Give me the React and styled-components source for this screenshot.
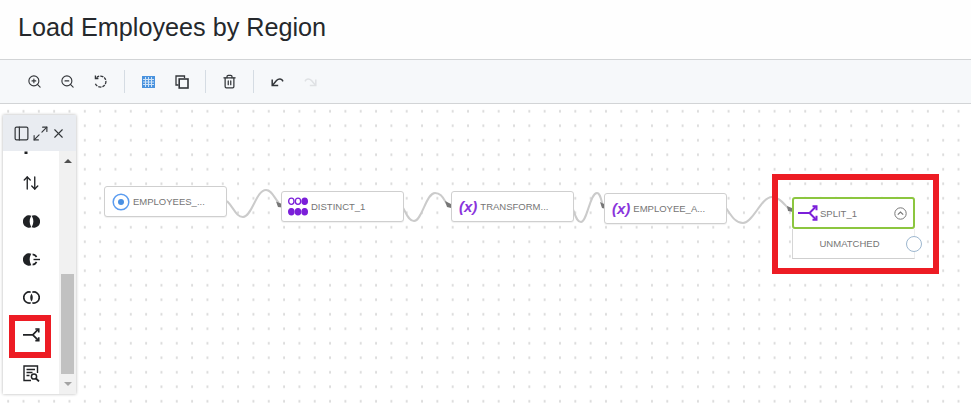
import React from 'react';
import styled, { createGlobalStyle } from 'styled-components';
import { ZoomIn, ZoomOut, Trash2, PanelLeft, Maximize2, X, ArrowUpDown } from 'lucide-react';

const GlobalStyle = createGlobalStyle`
  html, body {
    margin: 0;
    padding: 0;
    height: 100%;
    overflow: hidden;
    background: #fff;
    font-family: "Liberation Sans", Arial, sans-serif;
  }
  #root { height: 100%; }
`;

const Page = styled.div`
  display: flex;
  flex-direction: column;
  width: 971px;
  height: 407px;
`;

const TitleBar = styled.header`
  display: flex;
  align-items: center;
  flex: 0 0 60px;
  box-sizing: border-box;
  padding: 0 18px 4px;
  background: #fefefe;
  border-bottom: 1px solid #d2d4d6;
`;

const Title = styled.h1`
  margin: 0;
  font-size: 25.2px;
  font-weight: 400;
  color: #25282c;
`;

const Toolbar = styled.div`
  display: flex;
  align-items: center;
  flex: 0 0 44px;
  box-sizing: border-box;
  padding: 0 0 0 18px;
  background: #f6f8fa;
  border-bottom: 1px solid #d2d4d6;
`;

const ToolButton = styled.button`
  display: flex;
  align-items: center;
  justify-content: center;
  width: 33px;
  height: 30px;
  padding: 0;
  border: 0;
  background: none;
  color: ${p => (p.$disabled ? '#dfe1e4' : '#33363a')};
`;

const Separator = styled.span`
  width: 1px;
  height: 23px;
  margin: 0 7px;
  background: #d5dce3;
`;

const Canvas = styled.main`
  position: relative;
  flex: 1;
  overflow: hidden;
  background-color: #fff;
  background-image: radial-gradient(circle at center, #dadada 1px, transparent 1.3px);
  background-size: 15.33px 14.5px;
  background-position: 0.5px 0px;
`;

const Wires = styled.svg`
  position: absolute;
  left: 0;
  top: -104px;
  width: 971px;
  height: 407px;
  pointer-events: none;
`;

const Node = styled.div`
  position: absolute;
  left: ${p => p.$x}px;
  top: ${p => p.$y - 104}px;
  display: flex;
  align-items: center;
  gap: 3px;
  box-sizing: border-box;
  width: 123px;
  height: 31px;
  padding-left: ${p => p.$pad}px;
  background: #fff;
  border: 1px solid #cfcfcf;
  border-radius: 3px;
  box-shadow: 0 1px 1px rgba(0, 0, 0, 0.06);
`;

const NodeLabel = styled.span`
  font-size: 9.5px;
  color: #757575;
  white-space: nowrap;
`;

const Fx = styled.span`
  font-size: 15px;
  font-weight: 700;
  font-style: italic;
  color: #8a35dc;
  line-height: 1;
`;

const SplitBlock = styled.div`
  position: absolute;
  left: 792px;
  top: ${197 - 104}px;
  width: 123px;
`;

const SplitHead = styled.div`
  position: relative;
  z-index: 1;
  display: flex;
  align-items: center;
  gap: 2px;
  box-sizing: border-box;
  height: 32px;
  padding: 0 6px 0 4px;
  background: #fff;
  border: 2px solid #8cc63f;
  border-radius: 3px;
`;

const SplitName = styled(NodeLabel)`
  flex: 1;
`;

const Port = styled.div`
  position: relative;
  display: flex;
  align-items: center;
  justify-content: center;
  box-sizing: border-box;
  height: 30px;
  padding-right: 8px;
  background: #fff;
  border-left: 1px solid #d6d6d6;
  border-bottom: 1px solid #cfcfcf;
  border-right: 1px solid #eeeeee;
`;

const PortDot = styled.span`
  position: absolute;
  right: -8px;
  top: 7px;
  box-sizing: border-box;
  width: 16px;
  height: 16px;
  background: #fff;
  border: 1.5px solid #9db7cf;
  border-radius: 50%;
`;

const RedFrame = styled.div`
  position: absolute;
  left: 772px;
  top: ${174 - 104}px;
  box-sizing: border-box;
  width: 167px;
  height: 100px;
  border: 6px solid #ed1c24;
  pointer-events: none;
`;

const Palette = styled.aside`
  position: absolute;
  left: 3px;
  top: ${115 - 104}px;
  display: flex;
  flex-direction: column;
  width: 73px;
  height: 279px;
  background: #fff;
  box-shadow: 0 0 3px rgba(0, 0, 0, 0.3);
`;

const PaletteHead = styled.div`
  display: flex;
  align-items: center;
  justify-content: center;
  gap: 2px;
  flex: 0 0 36px;
  padding-top: 1px;
  box-sizing: border-box;
  background: #e9ecf1;
  color: #33363a;
`;

const PaletteBody = styled.div`
  display: flex;
  flex: 1;
  min-height: 0;
`;

const PaletteList = styled.div`
  display: flex;
  flex-direction: column;
  justify-content: flex-end;
  flex: 1;
  overflow: hidden;
  padding-bottom: 2px;
`;

const PaletteItem = styled.div`
  position: relative;
  display: flex;
  align-items: center;
  justify-content: center;
  flex: 0 0 38px;
  color: #202225;

  ${p => p.$active && `
    &::after {
      content: '';
      position: absolute;
      left: 6px;
      top: -1px;
      box-sizing: border-box;
      width: 42px;
      height: 43px;
      border: 6px solid #ed1c24;
    }
  `}
`;

const Scrollbar = styled.div`
  display: flex;
  flex-direction: column;
  align-items: center;
  flex: 0 0 17px;
  background: #f1f1f1;
`;

const ScrollArrow = styled.span`
  flex: 0 0 20px;
  display: flex;
  align-items: center;
  justify-content: center;

  &::before {
    content: '';
    border-left: 4px solid transparent;
    border-right: 4px solid transparent;
    ${p => (p.$down ? 'border-top: 4px solid #a3a3a3;' : 'border-bottom: 4px solid #505050;')}
  }
`;

const ScrollTrack = styled.div`
  display: flex;
  flex-direction: column;
  justify-content: flex-end;
  flex: 1;
  width: 13px;
`;

const ScrollThumb = styled.div`
  height: 100px;
  background: #c1c1c1;
`;

const ResetIcon = () => (
  <svg width="15" height="15" viewBox="0 0 15 15" fill="none" stroke="currentColor" strokeWidth="1.3">
    <path d="M3.6 3.6A5.5 5.5 0 1 1 2.3 9.5" strokeDasharray="3 1" />
    <path d="M2.4 1.5v3h3" />
  </svg>
);

const GridIcon = () => (
  <svg width="13" height="12" viewBox="0 0 13 12">
    <rect width="13" height="12" fill="#4a93de" />
    <path d="M3.5 1v10M6.5 1v10M9.5 1v10M1 3.5h11M1 6h11M1 8.5h11" stroke="#cfe3f7" strokeWidth="1" />
  </svg>
);

const CopyIcon = () => (
  <svg width="14" height="14" viewBox="0 0 14 14" fill="none" stroke="currentColor" strokeWidth="1.3">
    <path d="M9.5 3V1H1v9h2.5" />
    <rect x="4.2" y="4" width="8.8" height="9" strokeWidth="1.6" />
  </svg>
);

const UndoIcon = () => (
  <svg width="13" height="11" viewBox="0 0 13 11" fill="none" stroke="currentColor" strokeWidth="1.5">
    <path d="M1.2 3.5v6h6" />
    <path d="M1.5 9.2 5.5 4.6C7.6 2.4 10.8 2.4 12 5.4" />
  </svg>
);

const RedoIcon = () => (
  <svg width="13" height="11" viewBox="0 0 13 11" fill="none" stroke="currentColor" strokeWidth="1.5">
    <path d="M11.8 3.5v6h-6" />
    <path d="M11.5 9.2 7.5 4.6C5.4 2.4 2.2 2.4 1 5.4" />
  </svg>
);

const SplitIcon = ({ color, size = 20 }) => (
  <svg width={size} height={size * 0.8} viewBox="0 0 20 16" fill="none" stroke={color} strokeWidth="2">
    <path d="M0 8h11.5L17.5 2M11.5 8l6 6" />
    <path d="M14.5 1.2h4v4M14.5 14.8h4v-4" />
  </svg>
);

const DistinctIcon = () => (
  <svg width="20" height="19" viewBox="0 0 21 19" fill="#7b1fd9" stroke="#7b1fd9" strokeWidth="1.4">
    <ellipse cx="3.5" cy="4" rx="2.8" ry="3.3" fill="#fff" />
    <ellipse cx="10.5" cy="4" rx="2.8" ry="3.3" fill="#fff" />
    <ellipse cx="17.5" cy="4" rx="2.8" ry="3.3" />
    <ellipse cx="3.5" cy="15" rx="2.8" ry="3.3" />
    <ellipse cx="10.5" cy="15" rx="2.8" ry="3.3" />
    <ellipse cx="17.5" cy="15" rx="2.8" ry="3.3" />
  </svg>
);

const SourceIcon = () => (
  <svg width="18" height="18" viewBox="0 0 18 18">
    <circle cx="9" cy="9" r="7.8" fill="#fff" stroke="#5a9cf0" strokeWidth="1.5" />
    <circle cx="9" cy="9" r="3" fill="#4a90e2" />
  </svg>
);

const ChevronCircle = () => (
  <svg width="13" height="13" viewBox="0 0 13 13" fill="none" stroke="#777" strokeWidth="1">
    <circle cx="6.5" cy="6.5" r="5.7" />
    <path d="M3.8 7.6 6.5 5l2.7 2.6" strokeWidth="1.2" />
  </svg>
);

const InnerJoinIcon = () => (
  <svg width="17" height="13" viewBox="0 0 17 13" fill="currentColor">
    <path d="M8.3.7A6.2 6.2 0 1 0 8.3 12.3Q5 6.5 8.3.7Z" />
    <path d="M8.7.7A6.2 6.2 0 1 1 8.7 12.3Q12 6.5 8.7.7Z" />
  </svg>
);

const LookupIcon = () => (
  <svg width="17" height="13" viewBox="0 0 17 13" fill="currentColor">
    <path d="M8.3.7A6.2 6.2 0 1 0 8.3 12.3Q5 6.5 8.3.7Z" />
    <path d="M9.6 1.4A5 5 0 0 1 13.6 4M13.6 9A5 5 0 0 1 9.6 11.6" fill="none" stroke="currentColor" strokeWidth="1.6" />
    <path d="M10.5 6.5H17" fill="none" stroke="currentColor" strokeWidth="1.4" />
  </svg>
);

const OuterJoinIcon = () => (
  <svg width="17" height="13" viewBox="0 0 17 13" fill="none" stroke="currentColor" strokeWidth="1.7">
    <path d="M7.7 1.2A5.5 5.5 0 1 0 7.7 11.8" />
    <path d="M9.3 1.2A5.5 5.5 0 1 1 9.3 11.8" />
    <path d="M8.5 2.4Q11 6.5 8.5 10.6Q6 6.5 8.5 2.4Z" fill="currentColor" stroke="none" />
  </svg>
);

const ReportIcon = () => (
  <svg width="17" height="17" viewBox="0 0 17 17" fill="none" stroke="currentColor" strokeWidth="1.4">
    <path d="M8 15.5H1V1h13.5v7" />
    <path d="M3.5 4.5h8.5M3.5 7.5h6M3.5 10.5h3" />
    <circle cx="11" cy="11.5" r="2.6" strokeWidth="1.5" />
    <path d="M13 13.5 16 16.4" strokeWidth="1.8" />
  </svg>
);

const PartialIcon = () => (
  <svg width="17" height="17" viewBox="0 0 17 17" fill="currentColor">
    <rect x="1.5" y="14.5" width="3" height="2.5" />
  </svg>
);

const wires = [
  { line: 'M227 201 C234 208 236 217 243 217 C252 217 256 190 266 190 C272 190 274 198 279 203', tip: 'M276 201.5 L282 204 L282 207.5 L278 207Z' },
  { line: 'M402 206 C406 212 408 221 414 221 C422 221 426 193 435 193 C441 193 443 198 447 204', tip: 'M445 201 L451 204 L451 208 L447 207Z' },
  { line: 'M572 207 C575 213 576 222 581 222 C587 222 590 193 597 193 C600 193 601 199 603 206', tip: 'M600 202 L606 205 L606 209 L602 208Z' },
  { line: 'M726 208 C731 215 735 223 743 223 C753 223 761 197 772 197 C779 197 783 203 789 209', tip: 'M787 206 L793 208.5 L793 212 L788 211Z' },
];

const nodes = [
  { name: 'EMPLOYEES_...', x: 104, y: 186, pad: 7, icon: <SourceIcon /> },
  { name: 'DISTINCT_1', x: 281, y: 191, pad: 6, icon: <DistinctIcon /> },
  { name: 'TRANSFORM...', x: 451, y: 191, pad: 7, icon: <Fx>(x)</Fx> },
  { name: 'EMPLOYEE_A...', x: 604, y: 193, pad: 7, icon: <Fx>(x)</Fx> },
];

export default function App() {
  return (
    <Page>
      <GlobalStyle />
      <TitleBar>
        <Title>Load Employees by Region</Title>
      </TitleBar>
      <Toolbar>
        <ToolButton><ZoomIn size={15} strokeWidth={1.8} /></ToolButton>
        <ToolButton><ZoomOut size={15} strokeWidth={1.8} /></ToolButton>
        <ToolButton><ResetIcon /></ToolButton>
        <Separator />
        <ToolButton><GridIcon /></ToolButton>
        <ToolButton><CopyIcon /></ToolButton>
        <Separator />
        <ToolButton><Trash2 size={15} strokeWidth={2} /></ToolButton>
        <Separator />
        <ToolButton><UndoIcon /></ToolButton>
        <ToolButton $disabled><RedoIcon /></ToolButton>
      </Toolbar>
      <Canvas>
        <Wires viewBox="0 0 971 407">
          {wires.map(w => (
            <g key={w.line}>
              <path d={w.line} fill="none" stroke="#cbcbcb" strokeWidth="2" />
              <path d={w.tip} fill="#777" />
            </g>
          ))}
        </Wires>
        {nodes.map(n => (
          <Node key={n.name} $x={n.x} $y={n.y} $pad={n.pad}>
            {n.icon}
            <NodeLabel>{n.name}</NodeLabel>
          </Node>
        ))}
        <SplitBlock>
          <SplitHead>
            <SplitIcon color="#7b1fd9" />
            <SplitName>SPLIT_1</SplitName>
            <ChevronCircle />
          </SplitHead>
          <Port>
            <NodeLabel>UNMATCHED</NodeLabel>
            <PortDot />
          </Port>
        </SplitBlock>
        <RedFrame />
        <Palette>
          <PaletteHead>
            <PanelLeft size={17} strokeWidth={1.7} />
            <Maximize2 size={17} strokeWidth={1.6} />
            <X size={15} strokeWidth={1.8} />
          </PaletteHead>
          <PaletteBody>
            <PaletteList>
              <PaletteItem><PartialIcon /></PaletteItem>
              <PaletteItem><ArrowUpDown size={18} strokeWidth={1.8} /></PaletteItem>
              <PaletteItem><InnerJoinIcon /></PaletteItem>
              <PaletteItem><LookupIcon /></PaletteItem>
              <PaletteItem><OuterJoinIcon /></PaletteItem>
              <PaletteItem $active><SplitIcon color="#202225" size={17} /></PaletteItem>
              <PaletteItem><ReportIcon /></PaletteItem>
            </PaletteList>
            <Scrollbar>
              <ScrollArrow />
              <ScrollTrack><ScrollThumb /></ScrollTrack>
              <ScrollArrow $down />
            </Scrollbar>
          </PaletteBody>
        </Palette>
      </Canvas>
    </Page>
  );
}
